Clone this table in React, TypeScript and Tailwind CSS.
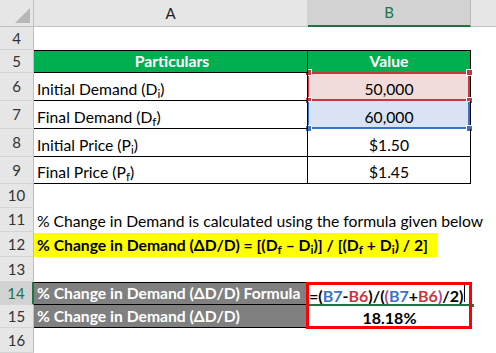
import React from 'react';

type RowProps = {
  n: number;
  h: string;
  active?: boolean;
  a?: React.ReactNode;
  b?: React.ReactNode;
  aClass?: string;
  bClass?: string;
};

const Row: React.FC<RowProps> = ({ n, h, active, a, b, aClass = '', bClass = '' }) => (
  <div className={`flex ${h}`}>
    <div
      className={`w-[34px] shrink-0 flex items-center justify-center border-b border-[#d4d4d4] text-[15px] ${
        active ? 'bg-[#d2d2d2] text-[#217346] border-r-2 border-r-[#217346]' : 'bg-[#e6e6e6] text-[#333] border-r border-r-[#bfbfbf]'
      }`}
    >
      {n}
    </div>
    <div className={`w-[274px] shrink-0 flex items-end whitespace-nowrap pl-[3px] pb-[2px] relative z-10 ${aClass}`}>{a}</div>
    <div className={`w-[163px] shrink-0 flex items-end justify-center whitespace-nowrap pb-[2px] relative ${bClass}`}>{b}</div>
    <div className="flex-1" />
  </div>
);

const Handle: React.FC<{ pos: string; color: string }> = ({ pos, color }) => (
  <span className={`absolute w-[7px] h-[7px] border border-white ${pos} ${color}`} />
);

export default function App() {
  return (
    <div className="w-[496px] h-[353px] overflow-hidden bg-white text-black text-[15.7px] leading-none" style={{ fontFamily: 'Lato, "Open Sans", sans-serif' }}>
      {/* column headers */}
      <div className="flex h-[27px] text-[15px]">
        <div className="w-[34px] shrink-0 bg-[#e6e6e6] border-r border-b border-[#bfbfbf] relative">
          <svg className="absolute right-[3px] bottom-[3px]" width="15" height="15" viewBox="0 0 15 15">
            <polygon points="15,0 15,15 0,15" fill="#b7b7b7" />
          </svg>
        </div>
        <div className="w-[274px] shrink-0 bg-[#e6e6e6] border-b border-[#bfbfbf] border-r border-r-[#d0d0d0] flex items-center justify-center text-[#222]">A</div>
        <div className="w-[163px] shrink-0 bg-[#d2d2d2] border-b-2 border-[#217346] border-r border-r-[#bcbcbc] flex items-center justify-center text-[#217346]">B</div>
        <div className="flex-1 bg-[#e6e6e6] border-b border-[#bfbfbf]" />
      </div>

      <Row n={4} h="h-[23px]" />
      <Row
        n={5}
        h="h-[23px]"
        aClass="bg-[#00b050] border-t border-b border-r border-black justify-center font-bold text-white"
        bClass="bg-[#00b050] border-t border-b border-r border-black font-bold text-white"
        a="Particulars"
        b="Value"
      />
      <Row
        n={6}
        h="h-[28px]"
        aClass="border-b border-r border-black"
        bClass="bg-[#f2dcdb] border-b border-r border-black"
        a={<span>Initial Demand (D<sub>i</sub>)</span>}
        b={
          <>
            <span className="absolute -left-[1px] -top-[1px] right-0 -bottom-[1px] border-2 border-[#c8373f]" />
            <Handle pos="-left-[3px] -top-[4px]" color="bg-[#c8373f]" />
            <Handle pos="-right-[3px] -top-[4px]" color="bg-[#c8373f]" />
            <Handle pos="-left-[3px] -bottom-[4px]" color="bg-[#c8373f]" />
            <Handle pos="-right-[3px] -bottom-[4px]" color="bg-[#c8373f]" />
            <span className="relative">50,000</span>
          </>
        }
      />
      <Row
        n={7}
        h="h-[28px]"
        aClass="border-b border-r border-black"
        bClass="bg-[#dae3f3] border-b border-r border-black"
        a={<span>Final Demand (D<sub>f</sub>)</span>}
        b={
          <>
            <span className="absolute -left-[1px] top-[1px] right-0 -bottom-[1px] border-2 border-t-0 border-[#3a72c8]" />
            <Handle pos="-left-[3px] -bottom-[4px]" color="bg-[#3a72c8]" />
            <Handle pos="-right-[3px] -bottom-[4px]" color="bg-[#3a72c8]" />
            <span className="relative">60,000</span>
          </>
        }
      />
      <Row
        n={8}
        h="h-[28px]"
        aClass="border-b border-r border-black"
        bClass="border-b border-r border-black"
        a={<span>Initial Price (P<sub>i</sub>)</span>}
        b="$1.50"
      />
      <Row
        n={9}
        h="h-[27px]"
        aClass="border-b border-r border-black"
        bClass="border-b border-r border-black"
        a={<span>Final Price (P<sub>f</sub>)</span>}
        b="$1.45"
      />
      <Row n={10} h="h-[24px]" />
      <Row n={11} h="h-[24px]" a="% Change in Demand is calculated using the formula given below" />
      <Row
        n={12}
        h="h-[25px]"
        aClass="!pl-0 !pb-0 items-stretch"
        a={
          <span className="bg-[#ffff00] font-bold pl-[3px] pr-[9px] flex items-end pb-[3px] mt-[1px]">
            <span>
              % Change in Demand (ΔD/D) = [(D<sub>f</sub> – D<sub>i</sub>)] / [(D<sub>f</sub> + D<sub>i</sub>) / 2]
            </span>
          </span>
        }
      />
      <Row n={13} h="h-[25px]" />
      <Row
        n={14}
        h="h-[23px]"
        active
        aClass="bg-[#808080] border-t border-b border-r border-black font-bold text-white"
        bClass="!justify-start pl-[1px] z-20"
        a="% Change in Demand (ΔD/D) Formula"
        b={
          <>
            <span className="font-bold text-[16px] relative top-[1px]">
              =(<span className="text-[#3a72c8]">B7</span>-<span className="text-[#c8373f]">B6</span>)/(
              <span className="text-[#b0479a]">(</span>
              <span className="text-[#3a72c8]">B7</span>+<span className="text-[#c8373f]">B6</span>
              <span className="text-[#b0479a]">)</span>/2)
            </span>
            <span className="w-px h-[17px] bg-black ml-[1px] mb-[1px]" />
            <span className="absolute left-0 right-0 -bottom-[1px] h-[2px] bg-[#217346]" />
            <span className="absolute -right-[4px] -bottom-[3px] w-[5px] h-[5px] bg-[#217346] border border-white" />
            {/* red highlight box over B14:B15 */}
            <span className="absolute -left-[2px] -right-[1px] top-0 h-[47px] border-[3px] border-[#ff0000]" />
          </>
        }
      />
      <Row
        n={15}
        h="h-[23px]"
        aClass="bg-[#808080] border-b border-r border-black font-bold text-white"
        a="% Change in Demand (ΔD/D)"
        b={<span className="font-bold text-[16px]">18.18%</span>}
      />
      <Row n={16} h="h-[25px]" />
    </div>
  );
}
